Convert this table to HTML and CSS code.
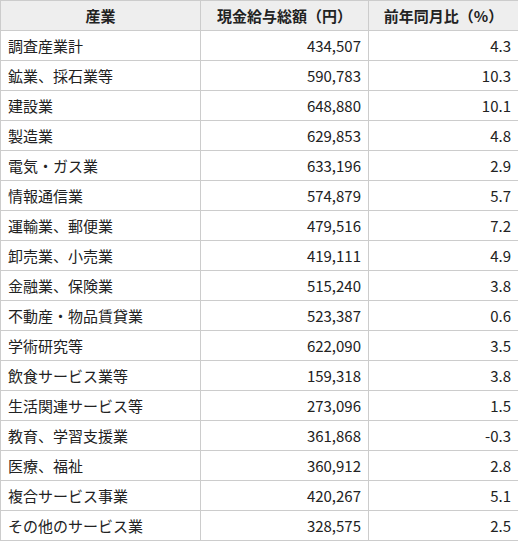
FILE: index.html
```html
<!DOCTYPE html>
<html lang="ja">
<head>
<meta charset="utf-8">
<link rel="stylesheet" href="styles.css">
</head>
<body>
<table class="wage-table">
  <colgroup>
    <col class="c1"><col class="c2"><col class="c3">
  </colgroup>
  <thead>
    <tr><th>産業</th><th>現金給与総額（円）</th><th>前年同月比（%）</th></tr>
  </thead>
  <tbody>
    <tr><td>調査産業計</td><td class="num">434,507</td><td class="num">4.3</td></tr>
    <tr><td>鉱業、採石業等</td><td class="num">590,783</td><td class="num">10.3</td></tr>
    <tr><td>建設業</td><td class="num">648,880</td><td class="num">10.1</td></tr>
    <tr><td>製造業</td><td class="num">629,853</td><td class="num">4.8</td></tr>
    <tr><td>電気・ガス業</td><td class="num">633,196</td><td class="num">2.9</td></tr>
    <tr><td>情報通信業</td><td class="num">574,879</td><td class="num">5.7</td></tr>
    <tr><td>運輸業、郵便業</td><td class="num">479,516</td><td class="num">7.2</td></tr>
    <tr><td>卸売業、小売業</td><td class="num">419,111</td><td class="num">4.9</td></tr>
    <tr><td>金融業、保険業</td><td class="num">515,240</td><td class="num">3.8</td></tr>
    <tr><td>不動産・物品賃貸業</td><td class="num">523,387</td><td class="num">0.6</td></tr>
    <tr><td>学術研究等</td><td class="num">622,090</td><td class="num">3.5</td></tr>
    <tr><td>飲食サービス業等</td><td class="num">159,318</td><td class="num">3.8</td></tr>
    <tr><td>生活関連サービス等</td><td class="num">273,096</td><td class="num">1.5</td></tr>
    <tr><td>教育、学習支援業</td><td class="num">361,868</td><td class="num">-0.3</td></tr>
    <tr><td>医療、福祉</td><td class="num">360,912</td><td class="num">2.8</td></tr>
    <tr><td>複合サービス事業</td><td class="num">420,267</td><td class="num">5.1</td></tr>
    <tr><td>その他のサービス業</td><td class="num">328,575</td><td class="num">2.5</td></tr>
  </tbody>
</table>
</body>
</html>
```

FILE: styles.css
```css
html, body {
  margin: 0;
  padding: 0;
  background: #fff;
}
body {
  font-family: "Noto Sans CJK JP", "Noto Sans", sans-serif;
  font-size: 15px;
  color: #222;
}
.wage-table {
  border-collapse: collapse;
  width: 518px;
  table-layout: fixed;
}
.c1 { width: 200px; }
.c2 { width: 168px; }
.c3 { width: 150px; }
.wage-table th,
.wage-table td {
  border: 1px solid #cccccc;
  height: 30px;
  padding: 0 7px;
  box-sizing: border-box;
  line-height: 20px;
  white-space: nowrap;
}
.wage-table th {
  background: #eeeeee;
  font-weight: bold;
  text-align: center;
}
.wage-table td {
  text-align: left;
}
.wage-table td.num {
  text-align: right;
}
```
